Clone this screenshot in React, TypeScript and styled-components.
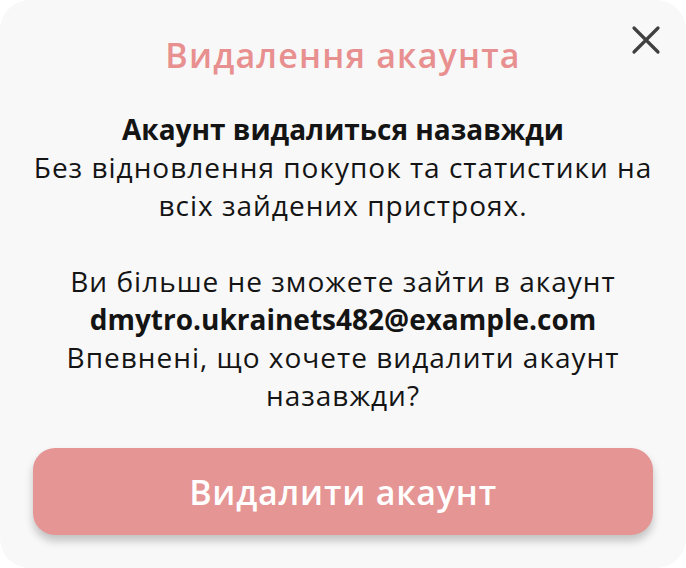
import styled, { createGlobalStyle } from "styled-components";

const GlobalStyle = createGlobalStyle`
    html, body {
        margin: 0;
        padding: 0;
        background: #ffffff;
    }
    * {
        box-sizing: border-box;
    }
`;

const FONT = `"Open Sans", "Noto Sans", sans-serif`;

export default function App() {
    const email = "dmytro.ukrainets482@example.com";

    return (
        <>
            <GlobalStyle/>
            <Card>
                <CloseButton aria-label="Закрити">
                    <svg width="30" height="30" viewBox="0 0 30 30" fill="none">
                        <path d="M3 3L27 27M27 3L3 27" stroke="#404040" strokeWidth="3.2" strokeLinecap="round"/>
                    </svg>
                </CloseButton>
                <Title>Видалення акаунта</Title>
                <Message>
                    <Strong>Акаунт видалиться назавжди</Strong>
                    <Line>Без відновлення покупок та статистики на</Line>
                    <Line>всіх зайдених пристроях.</Line>
                    <Spacer/>
                    <Line>Ви більше не зможете зайти в акаунт</Line>
                    <Strong>{email}</Strong>
                    <Line>Впевнені, що хочете видалити акаунт</Line>
                    <Line>назавжди?</Line>
                </Message>
                <DeleteButton>Видалити акаунт</DeleteButton>
            </Card>
        </>
    );
}

const Card = styled.div`
    position: relative;
    width: 686px;
    height: 568px;
    display: flex;
    flex-direction: column;
    align-items: center;
    padding: 35px 33px 33px;
    background: #f8f8f8;
    border-radius: 30px;
    font-family: ${FONT};
`;

const CloseButton = styled.button`
    position: absolute;
    top: 25px;
    right: 25px;
    width: 30px;
    height: 30px;
    padding: 0;
    border: none;
    background: transparent;
    cursor: pointer;
    display: flex;
`;

const Title = styled.h1`
    margin: 0;
    font-size: 34px;
    line-height: 40px;
    font-weight: 600;
    letter-spacing: 1.2px;
    color: #e88f8f;
    text-align: center;
`;

const Message = styled.div`
    margin-top: 35px;
    display: flex;
    flex-direction: column;
    align-items: center;
    font-size: 28px;
    line-height: 38px;
    color: #141414;
    text-align: center;
`;

const Line = styled.div`
    font-weight: 400;
    letter-spacing: 1px;
    white-space: nowrap;
`;

const Strong = styled(Line)`
    font-weight: 700;
    letter-spacing: 0;
`;

const Spacer = styled.div`
    height: 38px;
`;

const DeleteButton = styled.button`
    margin-top: 34px;
    width: 100%;
    height: 87px;
    border: none;
    border-radius: 22px;
    background: #e69595;
    box-shadow: 0 6px 8px rgba(0, 0, 0, 0.22);
    color: #ffffff;
    font-family: ${FONT};
    font-size: 34px;
    font-weight: 600;
    letter-spacing: 0.8px;
    cursor: pointer;
`;
